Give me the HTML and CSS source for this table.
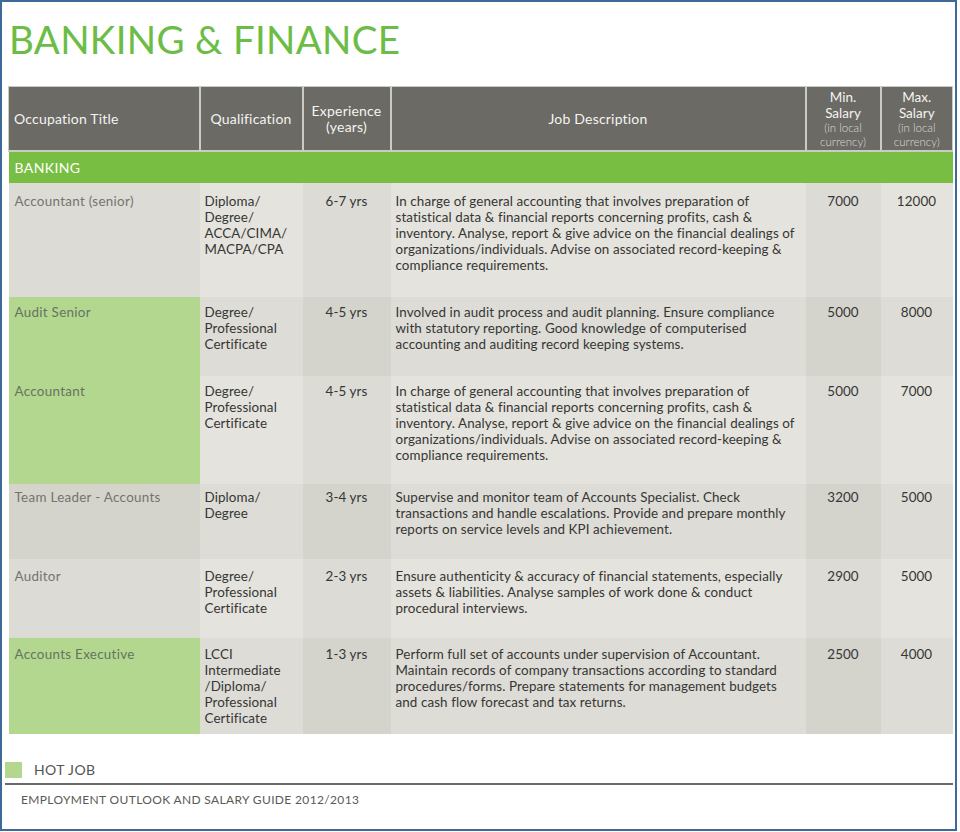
FILE: index.html
```html
<!DOCTYPE html>
<html lang="en">
<head>
<meta charset="utf-8">
<title>Banking &amp; Finance</title>
<link rel="stylesheet" href="styles.css">
</head>
<body>
<div class="frame">
  <h1 class="title">BANKING &amp; FINANCE</h1>
  <table class="salary">
    <colgroup>
      <col class="c1"><col class="c2"><col class="c3"><col class="c4"><col class="c5"><col class="c6">
    </colgroup>
    <thead>
      <tr class="head">
        <th class="left">Occupation Title</th>
        <th>Qualification</th>
        <th class="two">Experience<br>(years)</th>
        <th>Job Description</th>
        <th class="sal">Min.<br>Salary<span class="unit">(in local<br>currency)</span></th>
        <th class="sal">Max.<br>Salary<span class="unit">(in local<br>currency)</span></th>
      </tr>
    </thead>
    <tbody>
      <tr class="section"><td colspan="6">BANKING</td></tr>
      <tr class="odd r1">
        <td class="occ">Accountant (senior)</td>
        <td class="qual">Diploma/<br>Degree/<br>ACCA/CIMA/<br>MACPA/CPA</td>
        <td class="exp">6-7 yrs</td>
        <td class="desc">In charge of general accounting that involves preparation of<br>statistical data &amp; financial reports concerning profits, cash &amp;<br>inventory. Analyse, report &amp; give advice on the financial dealings of<br>organizations/individuals. Advise on associated record-keeping &amp;<br>compliance requirements.</td>
        <td class="num">7000</td>
        <td class="num">12000</td>
      </tr>
      <tr class="even r2">
        <td class="occ hot">Audit Senior</td>
        <td class="qual">Degree/<br>Professional<br>Certificate</td>
        <td class="exp">4-5 yrs</td>
        <td class="desc">Involved in audit process and audit planning. Ensure compliance<br>with statutory reporting. Good knowledge of computerised<br>accounting and auditing record keeping systems.</td>
        <td class="num">5000</td>
        <td class="num">8000</td>
      </tr>
      <tr class="odd r3">
        <td class="occ hot">Accountant</td>
        <td class="qual">Degree/<br>Professional<br>Certificate</td>
        <td class="exp">4-5 yrs</td>
        <td class="desc">In charge of general accounting that involves preparation of<br>statistical data &amp; financial reports concerning profits, cash &amp;<br>inventory. Analyse, report &amp; give advice on the financial dealings of<br>organizations/individuals. Advise on associated record-keeping &amp;<br>compliance requirements.</td>
        <td class="num">5000</td>
        <td class="num">7000</td>
      </tr>
      <tr class="even r4">
        <td class="occ">Team Leader - Accounts</td>
        <td class="qual">Diploma/<br>Degree</td>
        <td class="exp">3-4 yrs</td>
        <td class="desc">Supervise and monitor team of Accounts Specialist. Check<br>transactions and handle escalations. Provide and prepare monthly<br>reports on service levels and KPI achievement.</td>
        <td class="num">3200</td>
        <td class="num">5000</td>
      </tr>
      <tr class="odd r5">
        <td class="occ">Auditor</td>
        <td class="qual">Degree/<br>Professional<br>Certificate</td>
        <td class="exp">2-3 yrs</td>
        <td class="desc">Ensure authenticity &amp; accuracy of financial statements, especially<br>assets &amp; liabilities. Analyse samples of work done &amp; conduct<br>procedural interviews.</td>
        <td class="num">2900</td>
        <td class="num">5000</td>
      </tr>
      <tr class="even r6">
        <td class="occ hot">Accounts Executive</td>
        <td class="qual">LCCI<br>Intermediate<br>/Diploma/<br>Professional<br>Certificate</td>
        <td class="exp">1-3 yrs</td>
        <td class="desc">Perform full set of accounts under supervision of Accountant.<br>Maintain records of company transactions according to standard<br>procedures/forms. Prepare statements for management budgets<br>and cash flow forecast and tax returns.</td>
        <td class="num">2500</td>
        <td class="num">4000</td>
      </tr>
    </tbody>
  </table>
  <div class="legend">
    <span class="swatch"></span>
    <span class="legend-label">HOT JOB</span>
  </div>
  <footer class="footer">EMPLOYMENT OUTLOOK AND SALARY GUIDE 2012/2013</footer>
</div>
</body>
</html>
```
FILE: styles.css
```css
html, body {
  margin: 0;
  padding: 0;
  background: #ffffff;
}

body {
  font-family: "Lato", "Open Sans", sans-serif;
  color: #363634;
}

.frame {
  box-sizing: border-box;
  width: 957px;
  height: 831px;
  border: 2px solid #3e6a98;
  padding: 0 2px 0 6px;
}

.title {
  margin: 0;
  padding: 14px 0 0 1px;
  height: 67px;
  box-sizing: border-box;
  font-size: 38.5px;
  line-height: 46px;
  font-weight: 400;
  color: #6bbd45;
  letter-spacing: 0.3px;
}

.salary {
  width: 944px;
  table-layout: fixed;
  border-collapse: collapse;
  margin-top: 17px;
}

.c1 { width: 191px; }
.c2 { width: 103px; }
.c3 { width: 88px; }
.c4 { width: 415px; }
.c5 { width: 75px; }
.c6 { width: 72px; }

.head th {
  height: 62px;
  background: #6b6a65;
  color: #f4f4f0;
  font-weight: 400;
  font-size: 14px;
  line-height: 16px;
  letter-spacing: 0.2px;
  border: 2px solid #cbcbc5;
  border-top-width: 1px;
  padding: 0 4px;
  text-align: center;
  vertical-align: middle;
}

.head th:first-child { border-left-width: 1px; }
.head th:last-child { border-right-width: 1px; }

.head th.left {
  text-align: left;
  padding-left: 5px;
}

.head th.sal {
  font-size: 13.5px;
  line-height: 16px;
  padding: 1px 0 0;
  letter-spacing: 0;
}

.head .unit {
  display: block;
  font-size: 11.5px;
  line-height: 14px;
  color: #dcdcd6;
  font-weight: 300;
}

.section td {
  height: 32px;
  padding: 0 6px;
  background: #78be42;
  color: #ffffff;
  font-size: 14px;
  letter-spacing: 0.4px;
  vertical-align: middle;
}

tbody td {
  font-size: 13.4px;
  line-height: 16px;
  letter-spacing: 0.1px;
  vertical-align: top;
  padding: 8px 5px 0;
  box-sizing: border-box;
}

.r1 td { height: 114px; padding-top: 10px; }
.r2 td { height: 79px; padding-top: 7px; }
.r3 td { height: 108px; padding-top: 7px; }
.r4 td { height: 75px; padding-top: 5px; }
.r5 td { height: 79px; padding-top: 9px; }
.r6 td { height: 96px; padding-top: 8px; }

.odd td:nth-child(odd) { background: #dcdbd5; }
.odd td:nth-child(even) { background: #e4e3dd; }
.even td:nth-child(odd) { background: #d4d3cc; }
.even td:nth-child(even) { background: #dddcd6; }

td.occ {
  color: #74746d;
  padding-left: 6px;
  letter-spacing: 0.3px;
}

.odd td.hot,
.even td.hot {
  background: #b3d78f;
  color: #667360;
}

td.exp,
td.num {
  text-align: center;
}

td.desc {
  white-space: nowrap;
}

.legend {
  display: flex;
  align-items: center;
  gap: 12px;
  margin: 27px 0 0 -3px;
  height: 17px;
}

.swatch {
  width: 17px;
  height: 16px;
  background: #b3d78f;
}

.legend-label {
  font-size: 14px;
  color: #55554f;
  letter-spacing: 0.4px;
}

.footer {
  margin: 5px 0 0 -3px;
  border-top: 2px solid #6a6a66;
  padding: 7px 0 0 16px;
  font-size: 12px;
  line-height: 16px;
  color: #5a5a55;
  letter-spacing: 0.35px;
}
```
